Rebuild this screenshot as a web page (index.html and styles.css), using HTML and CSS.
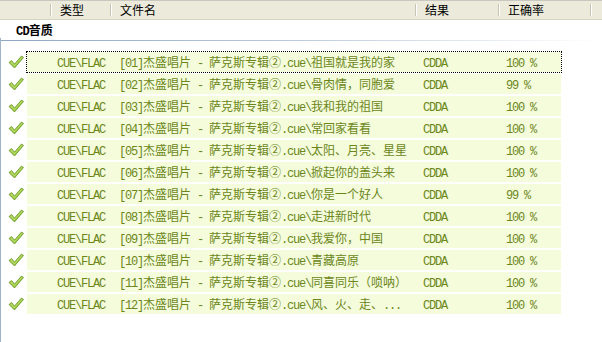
FILE: index.html
```html
<!DOCTYPE html>
<html>
<head>
<meta charset="utf-8">
<link rel="stylesheet" href="styles.css">
</head>
<body>
<div class="header">
  <div class="hc c0"></div>
  <div class="hc c1">类型</div>
  <div class="hc c2">文件名</div>
  <div class="hc c3">结果</div>
  <div class="hc c4">正确率</div>
  <div class="hc c5"></div>
</div>
<div class="group">
  <div class="group-title"><span class="lat">CD</span>音质</div>
  <div class="group-line"></div>
</div>
<div class="list">
  <div class="row focus">
    <svg class="chk" viewBox="0 0 16 14"><path d="M1 7.5 L3.5 5.5 L6.5 9 L13.5 1 L15.5 2.5 L6.5 13 Z" fill="#8fbf3a" stroke="#6d9a28" stroke-width="0.8" stroke-linejoin="round"/><path d="M2.2 7.5 L3.6 6.5 L6.5 10 L13.6 2 L14.4 2.6 L6.5 11.6 Z" fill="#b9dc6a"/></svg>
    <div class="cells"><span class="t1">CUE\FLAC</span><span class="t2">[01]<i>杰盛唱片</i> - <i>萨克斯专辑②</i>.cue\<i>祖国就是我的家</i></span><span class="t3">CDDA</span><span class="t4">100 %</span></div>
  </div>
  <div class="row">
    <svg class="chk" viewBox="0 0 16 14"><path d="M1 7.5 L3.5 5.5 L6.5 9 L13.5 1 L15.5 2.5 L6.5 13 Z" fill="#8fbf3a" stroke="#6d9a28" stroke-width="0.8" stroke-linejoin="round"/><path d="M2.2 7.5 L3.6 6.5 L6.5 10 L13.6 2 L14.4 2.6 L6.5 11.6 Z" fill="#b9dc6a"/></svg>
    <div class="cells"><span class="t1">CUE\FLAC</span><span class="t2">[02]<i>杰盛唱片</i> - <i>萨克斯专辑②</i>.cue\<i>骨肉情，同胞爱</i></span><span class="t3">CDDA</span><span class="t4">99 %</span></div>
  </div>
  <div class="row">
    <svg class="chk" viewBox="0 0 16 14"><path d="M1 7.5 L3.5 5.5 L6.5 9 L13.5 1 L15.5 2.5 L6.5 13 Z" fill="#8fbf3a" stroke="#6d9a28" stroke-width="0.8" stroke-linejoin="round"/><path d="M2.2 7.5 L3.6 6.5 L6.5 10 L13.6 2 L14.4 2.6 L6.5 11.6 Z" fill="#b9dc6a"/></svg>
    <div class="cells"><span class="t1">CUE\FLAC</span><span class="t2">[03]<i>杰盛唱片</i> - <i>萨克斯专辑②</i>.cue\<i>我和我的祖国</i></span><span class="t3">CDDA</span><span class="t4">100 %</span></div>
  </div>
  <div class="row">
    <svg class="chk" viewBox="0 0 16 14"><path d="M1 7.5 L3.5 5.5 L6.5 9 L13.5 1 L15.5 2.5 L6.5 13 Z" fill="#8fbf3a" stroke="#6d9a28" stroke-width="0.8" stroke-linejoin="round"/><path d="M2.2 7.5 L3.6 6.5 L6.5 10 L13.6 2 L14.4 2.6 L6.5 11.6 Z" fill="#b9dc6a"/></svg>
    <div class="cells"><span class="t1">CUE\FLAC</span><span class="t2">[04]<i>杰盛唱片</i> - <i>萨克斯专辑②</i>.cue\<i>常回家看看</i></span><span class="t3">CDDA</span><span class="t4">100 %</span></div>
  </div>
  <div class="row">
    <svg class="chk" viewBox="0 0 16 14"><path d="M1 7.5 L3.5 5.5 L6.5 9 L13.5 1 L15.5 2.5 L6.5 13 Z" fill="#8fbf3a" stroke="#6d9a28" stroke-width="0.8" stroke-linejoin="round"/><path d="M2.2 7.5 L3.6 6.5 L6.5 10 L13.6 2 L14.4 2.6 L6.5 11.6 Z" fill="#b9dc6a"/></svg>
    <div class="cells"><span class="t1">CUE\FLAC</span><span class="t2">[05]<i>杰盛唱片</i> - <i>萨克斯专辑②</i>.cue\<i>太阳、月亮、星星</i></span><span class="t3">CDDA</span><span class="t4">100 %</span></div>
  </div>
  <div class="row">
    <svg class="chk" viewBox="0 0 16 14"><path d="M1 7.5 L3.5 5.5 L6.5 9 L13.5 1 L15.5 2.5 L6.5 13 Z" fill="#8fbf3a" stroke="#6d9a28" stroke-width="0.8" stroke-linejoin="round"/><path d="M2.2 7.5 L3.6 6.5 L6.5 10 L13.6 2 L14.4 2.6 L6.5 11.6 Z" fill="#b9dc6a"/></svg>
    <div class="cells"><span class="t1">CUE\FLAC</span><span class="t2">[06]<i>杰盛唱片</i> - <i>萨克斯专辑②</i>.cue\<i>掀起你的盖头来</i></span><span class="t3">CDDA</span><span class="t4">100 %</span></div>
  </div>
  <div class="row">
    <svg class="chk" viewBox="0 0 16 14"><path d="M1 7.5 L3.5 5.5 L6.5 9 L13.5 1 L15.5 2.5 L6.5 13 Z" fill="#8fbf3a" stroke="#6d9a28" stroke-width="0.8" stroke-linejoin="round"/><path d="M2.2 7.5 L3.6 6.5 L6.5 10 L13.6 2 L14.4 2.6 L6.5 11.6 Z" fill="#b9dc6a"/></svg>
    <div class="cells"><span class="t1">CUE\FLAC</span><span class="t2">[07]<i>杰盛唱片</i> - <i>萨克斯专辑②</i>.cue\<i>你是一个好人</i></span><span class="t3">CDDA</span><span class="t4">99 %</span></div>
  </div>
  <div class="row">
    <svg class="chk" viewBox="0 0 16 14"><path d="M1 7.5 L3.5 5.5 L6.5 9 L13.5 1 L15.5 2.5 L6.5 13 Z" fill="#8fbf3a" stroke="#6d9a28" stroke-width="0.8" stroke-linejoin="round"/><path d="M2.2 7.5 L3.6 6.5 L6.5 10 L13.6 2 L14.4 2.6 L6.5 11.6 Z" fill="#b9dc6a"/></svg>
    <div class="cells"><span class="t1">CUE\FLAC</span><span class="t2">[08]<i>杰盛唱片</i> - <i>萨克斯专辑②</i>.cue\<i>走进新时代</i></span><span class="t3">CDDA</span><span class="t4">100 %</span></div>
  </div>
  <div class="row">
    <svg class="chk" viewBox="0 0 16 14"><path d="M1 7.5 L3.5 5.5 L6.5 9 L13.5 1 L15.5 2.5 L6.5 13 Z" fill="#8fbf3a" stroke="#6d9a28" stroke-width="0.8" stroke-linejoin="round"/><path d="M2.2 7.5 L3.6 6.5 L6.5 10 L13.6 2 L14.4 2.6 L6.5 11.6 Z" fill="#b9dc6a"/></svg>
    <div class="cells"><span class="t1">CUE\FLAC</span><span class="t2">[09]<i>杰盛唱片</i> - <i>萨克斯专辑②</i>.cue\<i>我爱你，中国</i></span><span class="t3">CDDA</span><span class="t4">100 %</span></div>
  </div>
  <div class="row">
    <svg class="chk" viewBox="0 0 16 14"><path d="M1 7.5 L3.5 5.5 L6.5 9 L13.5 1 L15.5 2.5 L6.5 13 Z" fill="#8fbf3a" stroke="#6d9a28" stroke-width="0.8" stroke-linejoin="round"/><path d="M2.2 7.5 L3.6 6.5 L6.5 10 L13.6 2 L14.4 2.6 L6.5 11.6 Z" fill="#b9dc6a"/></svg>
    <div class="cells"><span class="t1">CUE\FLAC</span><span class="t2">[10]<i>杰盛唱片</i> - <i>萨克斯专辑②</i>.cue\<i>青藏高原</i></span><span class="t3">CDDA</span><span class="t4">100 %</span></div>
  </div>
  <div class="row">
    <svg class="chk" viewBox="0 0 16 14"><path d="M1 7.5 L3.5 5.5 L6.5 9 L13.5 1 L15.5 2.5 L6.5 13 Z" fill="#8fbf3a" stroke="#6d9a28" stroke-width="0.8" stroke-linejoin="round"/><path d="M2.2 7.5 L3.6 6.5 L6.5 10 L13.6 2 L14.4 2.6 L6.5 11.6 Z" fill="#b9dc6a"/></svg>
    <div class="cells"><span class="t1">CUE\FLAC</span><span class="t2">[11]<i>杰盛唱片</i> - <i>萨克斯专辑②</i>.cue\<i>同喜同乐（唢呐）</i></span><span class="t3">CDDA</span><span class="t4">100 %</span></div>
  </div>
  <div class="row">
    <svg class="chk" viewBox="0 0 16 14"><path d="M1 7.5 L3.5 5.5 L6.5 9 L13.5 1 L15.5 2.5 L6.5 13 Z" fill="#8fbf3a" stroke="#6d9a28" stroke-width="0.8" stroke-linejoin="round"/><path d="M2.2 7.5 L3.6 6.5 L6.5 10 L13.6 2 L14.4 2.6 L6.5 11.6 Z" fill="#b9dc6a"/></svg>
    <div class="cells"><span class="t1">CUE\FLAC</span><span class="t2">[12]<i>杰盛唱片</i> - <i>萨克斯专辑②</i>.cue\<i>风、火、走、</i>...</span><span class="t3">CDDA</span><span class="t4">100 %</span></div>
  </div>
</div>
</body>
</html>
```

FILE: styles.css
```css
html, body {
  margin: 0;
  padding: 0;
  background: #ffffff;
  width: 602px;
  height: 342px;
  overflow: hidden;
}
body {
  font-family: "Liberation Mono", "Noto Sans CJK SC", monospace;
  font-size: 12px;
  letter-spacing: -1.2px;
}
i {
  font-style: normal;
  font-family: "Noto Sans CJK SC", sans-serif;
  font-size: 12px;
  letter-spacing: 0;
}
.header {
  display: flex;
  height: 20px;
  background: #ebeadb;
  border-top: 1px solid #c8c8c0;
  border-bottom: 1px solid #d6d3c0;
  box-sizing: border-box;
  font-family: "Noto Sans CJK SC", sans-serif;
  font-size: 12px;
  letter-spacing: 0;
  color: #000;
}
.hc {
  box-sizing: border-box;
  height: 18px;
  line-height: 17px;
  padding-left: 9px;
  position: relative;
}
.hc::after {
  content: "";
  position: absolute;
  right: 0;
  top: 3px;
  height: 12px;
  width: 1px;
  background: #c7c5b2;
  box-shadow: 1px 0 0 #ffffff;
}
.c0 { width: 51px; }
.c1 { width: 60px; }
.c2 { width: 305px; }
.c3 { width: 83px; }
.c4 { width: 92px; }
.c5 { flex: 1; }
.c5::after { display: none; }
.group {
  height: 18px;
}
.group-title {
  padding-left: 16px;
  padding-top: 2px;
  font-family: "Noto Sans CJK SC", sans-serif;
  font-size: 12px;
  font-weight: bold;
  line-height: 16px;
  letter-spacing: 0;
  color: #000;
}
.group-title .lat {
  font-family: "Liberation Mono", monospace;
  font-size: 12px;
  letter-spacing: -0.8px;
}
.group-line {
  height: 1px;
  background: linear-gradient(to right, #8fa6c4 0%, #b7c6d8 45%, #ffffff 100%);
}
.list {
  border-left: 1px solid #a3b2c6;
  padding-top: 13px;
  height: 320px;
  box-sizing: border-box;
}
.row {
  display: flex;
  align-items: center;
  height: 22px;
}
.chk {
  width: 16px;
  height: 14px;
  margin-left: 7px;
  margin-right: 3px;
  flex: none;
}
.cells {
  display: flex;
  align-items: baseline;
  width: 534px;
  height: 20px;
  line-height: 20px;
  margin-top: 1px;
  margin-bottom: 1px;
  background: #f4fcdc;
  color: #6c861a;
  box-sizing: border-box;
  white-space: nowrap;
}
.row.focus .cells {
  outline: 1px dotted #000;
  outline-offset: 0;
}
.t1 { width: 92px; padding-left: 30px; box-sizing: border-box; }
.t2 { width: 304px; box-sizing: border-box; }
.t3 { width: 83px; box-sizing: border-box; }
.t4 { flex: none; }
```
